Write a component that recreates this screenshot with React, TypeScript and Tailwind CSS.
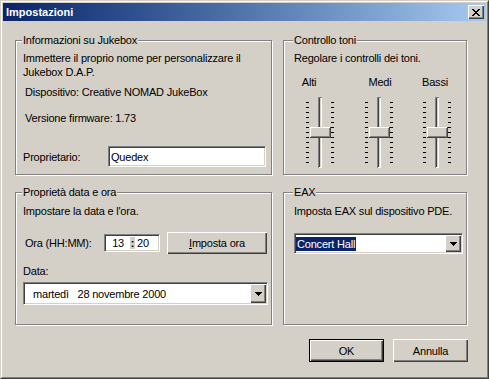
import React from "react";

const raised =
  "shadow-[inset_1px_1px_0_#fff,inset_-1px_-1px_0_#404040,inset_-2px_-2px_0_#808080]";
const sunken =
  "border border-t-[#808080] border-l-[#808080] border-b-white border-r-white shadow-[inset_1px_1px_0_#404040,inset_-1px_-1px_0_#d4d0c8]";

function Group({
  label,
  labelLeft,
  className,
  children,
}: {
  label: string;
  labelLeft: string;
  className: string;
  children: React.ReactNode;
}) {
  return (
    <div
      className={`relative border border-[#808080] shadow-[1px_1px_0_#fff,inset_1px_1px_0_#fff] ${className}`}
    >
      <span className={`absolute -top-[8px] ${labelLeft} bg-[#d4d0c8] px-[1px]`}>{label}</span>
      {children}
    </div>
  );
}

function Slider() {
  const ticks = Array.from({ length: 13 }, (_, i) => 5 + i * 5);
  return (
    <svg width="31" height="72" viewBox="0 0 31 72" shapeRendering="crispEdges">
      {ticks.map((y) => (
        <g key={y}>
          <rect x="1" y={y} width="3" height="1" fill="#000" />
          <rect x="26" y={y} width="3" height="1" fill="#000" />
        </g>
      ))}
      {/* track */}
      <rect x="13" y="0" width="1" height="71" fill="#808080" />
      <rect x="14" y="0" width="1" height="71" fill="#404040" />
      <rect x="15" y="0" width="1" height="71" fill="#d4d0c8" />
      <rect x="16" y="0" width="1" height="71" fill="#fff" />
      <rect x="13" y="0" width="4" height="1" fill="#808080" />
      <rect x="14" y="70" width="3" height="1" fill="#fff" />
      {/* thumb */}
      <rect x="5" y="30" width="21" height="11" fill="#d4d0c8" />
      <rect x="5" y="30" width="20" height="1" fill="#fff" />
      <rect x="5" y="30" width="1" height="10" fill="#fff" />
      <rect x="5" y="40" width="21" height="1" fill="#404040" />
      <rect x="25" y="30" width="1" height="11" fill="#404040" />
      <rect x="6" y="39" width="19" height="1" fill="#808080" />
      <rect x="24" y="31" width="1" height="9" fill="#808080" />
    </svg>
  );
}

function DownArrow() {
  return (
    <svg width="7" height="4" viewBox="0 0 7 4" shapeRendering="crispEdges">
      <rect x="0" y="0" width="7" height="1" fill="#000" />
      <rect x="1" y="1" width="5" height="1" fill="#000" />
      <rect x="2" y="2" width="3" height="1" fill="#000" />
      <rect x="3" y="3" width="1" height="1" fill="#000" />
    </svg>
  );
}

function Combo({ className, children }: { className: string; children: React.ReactNode }) {
  return (
    <div className={`flex bg-white p-[1px] ${sunken} ${className}`}>
      <div className="flex-1 flex items-center min-w-0">{children}</div>
      <div className={`w-[16px] h-full bg-[#d4d0c8] flex items-center justify-center ${raised}`}>
        <DownArrow />
      </div>
    </div>
  );
}

function CloseGlyph() {
  const rows = [
    [0, 2, 6, 2],
    [1, 2, 5, 2],
    [2, 4],
    [3, 2],
    [2, 4],
    [1, 2, 5, 2],
    [0, 2, 6, 2],
  ];
  return (
    <svg width="8" height="7" viewBox="0 0 8 7" shapeRendering="crispEdges">
      {rows.map((r, y) => (
        <g key={y}>
          <rect x={r[0]} y={y} width={r[1]} height="1" fill="#000" />
          {r.length > 2 && <rect x={r[2]} y={y} width={r[3]} height="1" fill="#000" />}
        </g>
      ))}
    </svg>
  );
}

export default function App() {
  return (
    <div className="w-[489px] h-[379px] bg-[#d4d0c8] text-black text-[11px] leading-[14px] tracking-[-0.2px] font-['Liberation_Sans',Arial,sans-serif] border border-t-[#d4d0c8] border-l-[#d4d0c8] border-b-[#404040] border-r-[#404040]">
      <div className="h-full border border-t-white border-l-white border-b-[#808080] border-r-[#808080] p-[1px] flex flex-col">
        {/* title bar */}
        <div className="h-[18px] flex items-center bg-linear-to-r from-[#0a246a] to-[#a6caf0] pl-[3px] pr-[2px]">
          <span className="text-white font-bold tracking-normal">Impostazioni</span>
          <div className={`ml-auto w-[16px] h-[14px] bg-[#d4d0c8] flex items-center justify-center ${raised}`}>
            <CloseGlyph />
          </div>
        </div>

        <div className="pl-[12px] pt-[19px]">
          <div className="flex gap-[11px]">
            <Group label="Informazioni su Jukebox" labelLeft="left-[6px]" className="w-[257px] h-[135px]">
              <div className="pt-[10px] pl-[7px]">
                <p>
                  Immettere il proprio nome per personalizzare il
                  <br />
                  Jukebox D.A.P.
                </p>
                <p className="mt-[6px] ml-[2px]">Dispositivo: Creative NOMAD JukeBox</p>
                <p className="mt-[12px] ml-[2px]">Versione firmware: 1.73</p>
                <div className="mt-[21px] flex items-center">
                  <span className="w-[85px]">Proprietario:</span>
                  <div className={`w-[158px] h-[21px] bg-white flex items-center pl-[2px] ${sunken}`}>
                    Quedex
                  </div>
                </div>
              </div>
            </Group>

            <Group label="Controllo toni" labelLeft="left-[9px]" className="w-[184px] h-[135px]">
              <div className="pt-[10px]">
                <p className="pl-[10px]">Regolare i controlli dei toni.</p>
                <div className="flex mt-[10px]">
                  <span className="w-[40px] text-center ml-[5px]">Alti</span>
                  <span className="w-[40px] text-center ml-[31px]">Medi</span>
                  <span className="w-[40px] text-center ml-[15px]">Bassi</span>
                </div>
                <div className="flex mt-[8px] pl-[21px] gap-[28px]">
                  <Slider />
                  <Slider />
                  <div className="-ml-[1px]">
                    <Slider />
                  </div>
                </div>
              </div>
            </Group>
          </div>

          <div className="flex gap-[11px] mt-[17px]">
            <Group label="Proprietà data e ora" labelLeft="left-[6px]" className="w-[257px] h-[133px]">
              <div className="pt-[11px] pl-[7px]">
                <p>Impostare la data e l'ora.</p>
                <div className="mt-[14px] flex items-center h-[22px]">
                  <span className="ml-[2px] w-[79px]">Ora (HH:MM):</span>
                  <div className={`w-[56px] h-[18px] bg-white flex items-center ${sunken}`}>
                    <span className="ml-[7px] w-[12px] text-right">13</span>
                    <span className="ml-[6px] w-[5px] h-[12px] bg-[#d4d0c8] flex items-center justify-center font-bold">
                      :
                    </span>
                    <span className="ml-[2px]">20</span>
                  </div>
                  <button
                    className={`ml-[7px] w-[100px] h-[22px] bg-[#d4d0c8] flex items-center justify-center ${raised}`}
                  >
                    <span>
                      <span className="underline">I</span>mposta ora
                    </span>
                  </button>
                </div>
                <p className="mt-[10px]">Data:</p>
                <Combo className="mt-[4px] w-[245px] h-[23px]">
                  <span className="pl-[8px] whitespace-pre">martedì   28 novembre 2000</span>
                </Combo>
              </div>
            </Group>

            <Group label="EAX" labelLeft="left-[9px]" className="w-[184px] h-[133px]">
              <div className="pt-[11px] pl-[10px]">
                <p>Imposta EAX sul dispositivo PDE.</p>
                <Combo className="mt-[15px] w-[169px] h-[21px]">
                  <span className="ml-[0px] px-[1px] h-[14px] flex items-center bg-[#0a246a] text-white">
                    Concert Hall
                  </span>
                </Combo>
              </div>
            </Group>
          </div>

          <div className="w-[453px] flex justify-end gap-[9px] mt-[14px]">
            <button
              className={`w-[75px] h-[23px] bg-[#d4d0c8] border border-black flex items-center justify-center ${raised}`}
            >
              OK
            </button>
            <button className={`w-[75px] h-[23px] bg-[#d4d0c8] flex items-center justify-center ${raised}`}>
              Annulla
            </button>
          </div>
        </div>
      </div>
    </div>
  );
}
